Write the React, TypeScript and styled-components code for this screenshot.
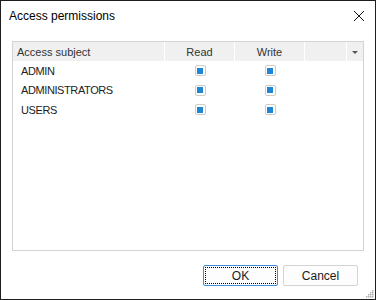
import React from "react";
import styled, { createGlobalStyle } from "styled-components";

const Global = createGlobalStyle`
  html, body { margin: 0; padding: 0; background: #ffffff; }
  * { box-sizing: border-box; }
`;

const Window = styled.div`
  position: relative;
  width: 376px;
  height: 300px;
  border: 1px solid #1e1e1e;
  background: #ffffff;
  display: flex;
  flex-direction: column;
  font-family: "Liberation Sans", Arial, sans-serif;
  color: #1a1a1a;
`;

const TitleBar = styled.div`
  height: 30px;
  display: flex;
  align-items: center;
  justify-content: space-between;
  padding: 0 10px 0 8px;
`;

const Title = styled.div`
  font-size: 12px;
  color: #000;
`;

const CloseBtn = styled.div`
  width: 12px;
  height: 12px;
  display: flex;
  align-items: center;
  justify-content: center;
`;

const Body = styled.div`
  flex: 1;
  display: flex;
  flex-direction: column;
  padding: 10px 11px 0 11px;
`;

const Grid = styled.div`
  height: 210px;
  border: 1px solid #d3d3d3;
  display: flex;
  flex-direction: column;
`;

const HeaderRow = styled.div`
  height: 19px;
  background: #f0f0f0;
  display: flex;
`;

const HeaderCell = styled.div<{ $w: number; $align?: string; $last?: boolean }>`
  width: ${(p) => p.$w}px;
  flex: none;
  display: flex;
  align-items: center;
  justify-content: ${(p) => p.$align || "flex-start"};
  padding-left: ${(p) => (p.$align ? 0 : 4)}px;
  border-right: ${(p) => (p.$last ? "none" : "1px solid #ffffff")};
  font-size: 11px;
  color: #333;
`;

const Arrow = styled.div`
  width: 0;
  height: 0;
  border-left: 3px solid transparent;
  border-right: 3px solid transparent;
  border-top: 3px solid #555;
  margin-top: 1px;
`;

const Row = styled.div`
  height: 19.5px;
  display: flex;
  align-items: center;
`;

const NameCell = styled.div`
  width: 152px;
  padding-left: 8px;
  font-size: 11px;
  color: #222;
  letter-spacing: -0.4px;
`;

const CheckCell = styled.div`
  width: 70px;
  display: flex;
  justify-content: center;
  align-items: center;
`;

const Check = styled.div`
  width: 11px;
  height: 11px;
  border: 1px solid #cbcbcb;
  border-radius: 2px;
  background: #fff;
  display: flex;
  align-items: center;
  justify-content: center;
  &::after {
    content: "";
    width: 6px;
    height: 6px;
    background: #1f86d6;
  }
`;

const Footer = styled.div`
  display: flex;
  justify-content: flex-end;
  gap: 5px;
  padding: 14px 6px 0 0;
`;

const Button = styled.button<{ $primary?: boolean }>`
  position: relative;
  width: 75px;
  height: 21px;
  border: 1px solid ${(p) => (p.$primary ? "#3a8ddb" : "#d4d4d4")};
  border-radius: 2px;
  background: #fdfdfd;
  font-family: "Liberation Sans", Arial, sans-serif;
  font-size: 12px;
  color: #1a1a1a;
  padding: 0;
  display: flex;
  align-items: center;
  justify-content: center;
  outline: ${(p) => (p.$primary ? "1px dotted #000" : "none")};
  outline-offset: -3px;
`;

const Grip = styled.svg`
  position: absolute;
  right: 1px;
  bottom: 1px;
`;

const rows = ["ADMIN", "ADMINISTRATORS", "USERS"];

const gripDots: [number, number][] = [
  [8, 2],
  [6, 4], [8, 4],
  [4, 6], [6, 6], [8, 6],
  [2, 8], [4, 8], [6, 8], [8, 8],
];

export default function App() {
  return (
    <>
      <Global />
      <Window>
        <TitleBar>
          <Title>Access permissions</Title>
          <CloseBtn>
            <svg width="12" height="12" viewBox="0 0 12 12">
              <path d="M1 1L11 11M11 1L1 11" stroke="#1a1a1a" strokeWidth="1" />
            </svg>
          </CloseBtn>
        </TitleBar>
        <Body>
          <Grid>
            <HeaderRow>
              <HeaderCell $w={152}>Access subject</HeaderCell>
              <HeaderCell $w={70} $align="center">Read</HeaderCell>
              <HeaderCell $w={70} $align="center">Write</HeaderCell>
              <HeaderCell $w={42} />
              <HeaderCell $w={16} $align="center" $last>
                <Arrow />
              </HeaderCell>
            </HeaderRow>
            {rows.map((r) => (
              <Row key={r}>
                <NameCell>{r}</NameCell>
                <CheckCell>
                  <Check />
                </CheckCell>
                <CheckCell>
                  <Check />
                </CheckCell>
              </Row>
            ))}
          </Grid>
          <Footer>
            <Button $primary>OK</Button>
            <Button>Cancel</Button>
          </Footer>
        </Body>
        <Grip width="10" height="10" viewBox="0 0 10 10">
          {gripDots.map(([x, y], i) => (
            <rect key={i} x={x} y={y} width="1.5" height="1.5" fill="#b0b0b0" />
          ))}
        </Grip>
      </Window>
    </>
  );
}
